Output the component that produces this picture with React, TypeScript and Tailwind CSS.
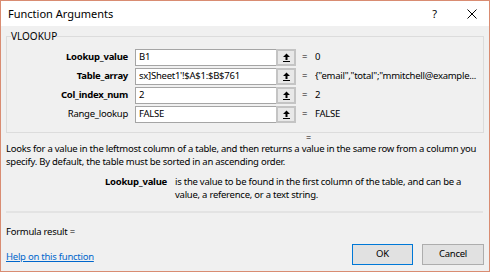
import React from "react";

const RefIcon = () => (
  <svg width="9" height="10" viewBox="0 0 9 10" className="block">
    <path d="M4.5 0.5 L8 4 L5.5 4 L5.5 7 L3.5 7 L3.5 4 L1 4 Z" fill="#000" />
    <rect x="1" y="8" width="7" height="1" fill="#000" />
  </svg>
);

const rows = [
  { label: "Lookup_value", value: "B1", result: "0", bold: true },
  { label: "Table_array", value: "sx]Sheet1'!$A$1:$B$761", result: '{"email","total";"mmitchell@example...', bold: true },
  { label: "Col_index_num", value: "2", result: "2", bold: true },
  { label: "Range_lookup", value: "FALSE", result: "FALSE", bold: false },
];

export default function App() {
  return (
    <div
      className="w-[490px] h-[272px] border border-[#d98c72] bg-[#f0f0f0] flex flex-col text-[#000] overflow-hidden"
      style={{ fontFamily: '"Noto Sans", "Open Sans", sans-serif' }}
    >
      <div className="h-[25px] bg-white flex items-center pl-[7px] pr-[12px] shrink-0">
        <span className="text-[11px] leading-none">Function Arguments</span>
        <span className="ml-auto text-[11px] leading-none mr-[30px]">?</span>
        <svg width="10" height="10" viewBox="0 0 10 10">
          <path d="M0.5 0.5 L9.5 9.5 M9.5 0.5 L0.5 9.5" stroke="#000" strokeWidth="1" />
        </svg>
      </div>
      <div className="flex flex-col px-[5px] flex-1 text-[9.5px] tracking-[-0.25px]">
        <fieldset className="mt-[4px] border border-[#dcdcdc] h-[103px] pl-[4px] pr-0">
          <legend className="text-[10px] tracking-normal leading-[12px] px-0">VLOOKUP</legend>
          <div className="flex flex-col gap-[2px] mt-[7px]">
            {rows.map((r) => (
              <div key={r.label} className="flex items-center h-[17px]">
                <div className={`w-[124px] text-right pr-[7px] ${r.bold ? "font-bold" : ""}`}>
                  {r.label}
                </div>
                <div className="w-[141px] h-[17px] bg-white border border-[#a5a5a5] border-r-0 flex items-center pl-[3px] overflow-hidden whitespace-nowrap">
                  {r.value}
                </div>
                <div className="w-[20px] h-[17px] border-[2px] border-[#c4c4c4] bg-[#e8e8e8] flex items-center justify-center">
                  <RefIcon />
                </div>
                <div className="ml-[6px] w-[13px]">=</div>
                <div className="whitespace-nowrap">{r.result}</div>
              </div>
            ))}
          </div>
        </fieldset>
        <div className="h-[4px] leading-[4px] text-[9px] pl-[300px] mt-[3px]">=</div>
        <p className="leading-[13px] mt-[2px] whitespace-nowrap">
          Looks for a value in the leftmost column of a table, and then returns a value in the same row from a column you
          <br />
          specify. By default, the table must be sorted in an ascending order.
        </p>
        <div className="flex mt-[7px] leading-[13px]">
          <div className="w-[169px] text-right font-bold pr-[8px] shrink-0">Lookup_value</div>
          <div className="whitespace-nowrap">
            is the value to be found in the first column of the table, and can be a
            <br />
            value, a reference, or a text string.
          </div>
        </div>
        <div className="mt-[10px] h-[2px] bg-[#e3e3e3] w-[477px]" />
        <div className="mt-[12px] leading-[13px]">Formula result =</div>
        <div className="flex items-end mt-[6px]">
          <a className="text-[#0066cc] underline leading-[13px] mb-[2px]">Help on this function</a>
          <button className="ml-auto w-[61px] h-[21px] border border-[#0078d7] bg-[#e1e1e1]">OK</button>
          <button className="ml-[9px] w-[62px] h-[21px] border border-[#adadad] bg-[#e1e1e1]">Cancel</button>
        </div>
      </div>
    </div>
  );
}
